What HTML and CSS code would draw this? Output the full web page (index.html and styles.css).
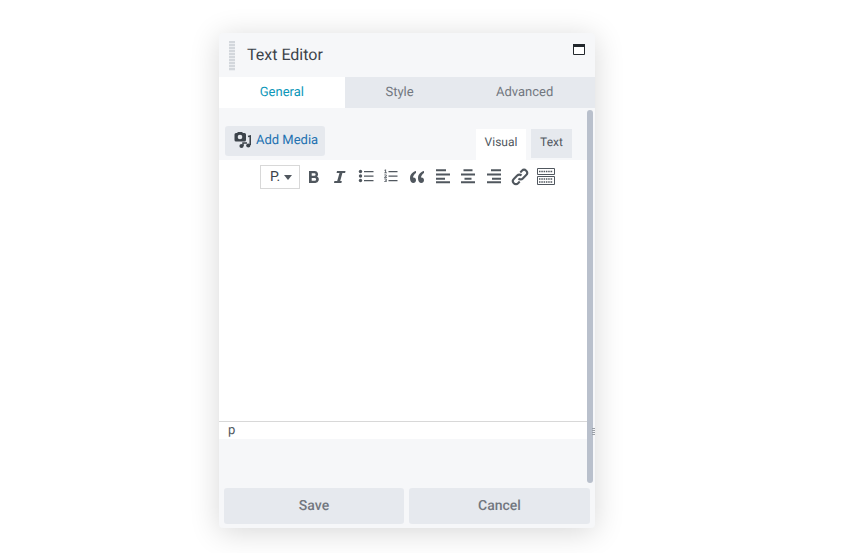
FILE: index.html
```html
<!DOCTYPE html>
<html lang="en">
<head>
    <meta charset="UTF-8">
    <title>Text Editor</title>
    <link rel="stylesheet" href="styles.css">
</head>
<body>
    <div class="panel">
        <div class="panel-head">
            <span class="grip"></span>
            <h1>Text Editor</h1>
            <svg class="max-icon" width="12" height="12" viewBox="0 0 12 12"><path d="M.5 1.500h11v10H.5z" fill="#fff" stroke="#23282d"/><path d="M0 1h12v3H0z" fill="#23282d"/></svg>
        </div>

        <div class="tabs">
            <div class="tab tab-general active">General</div>
            <div class="tab tab-style">Style</div>
            <div class="tab tab-advanced">Advanced</div>
        </div>

        <div class="panel-body">
            <div class="editor-top">
                <div class="add-media">
                    <svg width="18" height="18" viewBox="0 0 18 18">
                        <path d="M3 2h1l1-1h4l1 1h1.500a1.500 1.500 0 0 1 1.500 1.500V9a1.500 1.500 0 0 1-1.500 1.500H3A1.500 1.500 0 0 1 1.500 9V3.500A1.500 1.500 0 0 1 3 2z" fill="#3c434a"/>
                        <circle cx="7" cy="6" r="2.300" fill="#e6e9ee"/>
                        <path d="M15 5.500l2.300-.5v9" fill="none" stroke="#3c434a" stroke-width="1.700"/>
                        <circle cx="15.300" cy="14.500" r="2.100" fill="#3c434a"/>
                        <circle cx="8.500" cy="15" r="2.100" fill="#3c434a"/>
                        <path d="M10 15v-3h4" fill="none" stroke="#3c434a" stroke-width="1.500"/>
                    </svg>
                    <span>Add Media</span>
                </div>
                <div class="mode-tabs">
                    <div class="mode mode-visual">Visual</div>
                    <div class="mode mode-text">Text</div>
                </div>
            </div>

            <div class="editor">
                <div class="toolbar">
                    <div class="format-select">P.<span class="caret"></span></div>
                    <svg class="tool" width="16" height="16" viewBox="0 0 16 16"><path d="M3 2h5.800a3.200 3.200 0 0 1 2.300 5.500 3.500 3.500 0 0 1-2 6.500H3zM5.700 4.200v2.600h2.600a1.300 1.300 0 0 0 0-2.600zm0 4.800v2.800h3a1.400 1.400 0 0 0 0-2.800z" fill="#50575e" fill-rule="evenodd"/></svg>
                    <svg class="tool" width="16" height="16" viewBox="0 0 16 16"><path d="M5 2h8.500l-.4 2h-2.700L8.200 12h1.600l-.4 2H2l.4-2h2.800L7.500 4H4.600z" fill="#50575e"/></svg>
                    <svg class="tool" width="16" height="16" viewBox="0 0 16 16"><g fill="#50575e"><circle cx="2.500" cy="2.500" r="1.700"/><circle cx="2.500" cy="7" r="1.700"/><circle cx="2.500" cy="11.500" r="1.700"/><path d="M6 2h9.500v1.200H6zM6 6.500h9.500v1.200H6zM6 11h9.500v1.200H6z"/></g></svg>
                    <svg class="tool" width="16" height="16" viewBox="0 0 16 16"><g fill="#50575e"><path d="M5.500 2h9v1.200h-9zM5.500 6.500h9v1.200h-9zM5.500 11h9v1.200h-9z"/><path d="M1.300 1.100l1.200-.7h.6v3.200h.9v.7H1.200v-.7h1V1.300l-.9.500zM1 8.800v-.6c1-.7 1.800-1.200 1.800-1.700 0-.5-.8-.4-1.600 0v-.7c1-.6 2.600-.4 2.600.6 0 .7-.6 1.200-1.400 1.700H4v.7zM1.200 9.700c1-.4 2.600-.4 2.600.7 0 .4-.2.600-.5.800.4.200.6.400.6.800 0 1.200-1.700 1.300-2.700.8V12c.8.400 1.800.4 1.800-.1 0-.3-.4-.4-1-.4v-.6c.6 0 .9-.1.900-.4 0-.4-.9-.3-1.700 0z"/></g></svg>
                    <svg class="tool" width="16" height="16" viewBox="0 0 16 16"><path d="M7 2C4.300 2.600 1 4.800 1 9.200c0 3 1.500 4.800 3.300 4.800C5.900 14 7 12.800 7 11.200c0-1.600-1-2.700-2.400-2.700-.3 0-.5 0-.7.100C4.200 6.600 5.500 4.800 7 3.900zM15 2c-2.700.6-6 2.800-6 7.200 0 3 1.500 4.800 3.300 4.800 1.600 0 2.700-1.200 2.700-2.800 0-1.600-1-2.700-2.400-2.700-.3 0-.5 0-.7.100.3-2 1.600-3.800 3.100-4.700z" fill="#50575e"/></svg>
                    <svg class="tool" width="16" height="16" viewBox="0 0 16 16"><path d="M1 .3h10v2H1zM1 4.500h14v2H1zM1 8.700h9v2H1zM1 12.300h14v2H1z" fill="#50575e"/></svg>
                    <svg class="tool" width="16" height="16" viewBox="0 0 16 16"><path d="M3.500 .3h9v2h-9zM1 4.500h14v2H1zM4.500 8.700h7v2h-7zM1 12.300h14v2H1z" fill="#50575e"/></svg>
                    <svg class="tool" width="16" height="16" viewBox="0 0 16 16"><path d="M5 .3h10v2H5zM1 4.500h14v2H1zM6 8.700h9v2H6zM1 12.300h14v2H1z" fill="#50575e"/></svg>
                    <svg class="tool tool-wide" width="18" height="18" viewBox="0 0 18 18"><g fill="none" stroke="#50575e" stroke-width="2.100"><path d="M7.500 10.500a3 3 0 0 0 4.300 0l3.400-3.400a3 3 0 0 0-4.300-4.300L9.300 4.400"/><path d="M10.500 7.500a3 3 0 0 0-4.300 0l-3.400 3.400a3 3 0 0 0 4.300 4.300l1.600-1.600"/></g></svg>
                    <svg class="tool tool-wide" width="18" height="17" viewBox="0 0 18 17"><path d="M.5.500h17v6H.5zM.5 8.500h17v8H.5z" fill="none" stroke="#50575e"/><path d="M2 3.500h14M2 11h14M2 14h14" fill="none" stroke="#50575e" stroke-width="1.500" stroke-dasharray="1.500 .8"/></svg>
                </div>
                <div class="editor-area"></div>
                <div class="status">p</div>
            </div>

            <span class="scrollbar"></span>
            <span class="resize"></span>
        </div>

        <div class="panel-foot">
            <div class="btn btn-save">Save</div>
            <div class="btn btn-cancel">Cancel</div>
        </div>
    </div>
</body>
</html>
```

FILE: styles.css
```css
* {
    margin: 0;
    padding: 0;
    box-sizing: border-box;
}

body {
    font-family: 'Roboto', sans-serif;
    text-rendering: geometricPrecision;
    background-color: #fff;
    height: 553px;
    overflow: hidden;
    padding: 33px 0 0 219px;
}

.panel {
    width: 376px;
    height: 495px;
    background-color: #f6f7f9;
    border-radius: 4px;
    box-shadow: 0 4px 30px rgba(0, 0, 0, 0.16);
    display: flex;
    flex-direction: column;
}

.panel-head {
    height: 44px;
    display: flex;
    align-items: center;
    padding: 0 10px;
    flex: none;
}

.grip {
    width: 6px;
    height: 30px;
    margin-top: 1px;
    background: repeating-linear-gradient(#d3d7dc 0, #d3d7dc 2px, #eceef1 2px, #eceef1 3px);
}

h1 {
    font-size: 16px;
    font-weight: 400;
    color: #3c434a;
    margin-left: 12px;
    margin-bottom: 1px;
}

.max-icon {
    margin-left: auto;
    margin-bottom: 13px;
}

.tabs {
    height: 31px;
    display: flex;
    flex: none;
    background-color: #e6e9ee;
    font-size: 13px;
    color: #72777f;
}

.tab {
    display: flex;
    align-items: center;
    justify-content: center;
    padding-bottom: 1px;
}

.tab-general { width: 126px; }
.tab-style { width: 110px; }
.tab-advanced { width: 141px; }

.tab.active {
    background-color: #fff;
    color: #0d97b9;
}

.panel-body {
    height: 375px;
    flex: none;
    position: relative;
}

.editor-top {
    height: 52px;
    display: flex;
    align-items: flex-end;
    justify-content: space-between;
    padding-left: 6px;
    padding-right: 23px;
}

.add-media {
    width: 100px;
    height: 30px;
    margin-bottom: 4px;
    background-color: #e6e9ee;
    border-radius: 3px;
    display: flex;
    align-items: center;
    padding-left: 8px;
    padding-bottom: 2px;
    gap: 5px;
    font-size: 13px;
    color: #2271b1;
}

.mode-tabs {
    display: flex;
    gap: 5px;
    font-size: 12px;
    align-items: flex-start;
}

.mode {
    display: flex;
    align-items: center;
    justify-content: center;
    padding-bottom: 5px;
}

.mode-visual {
    width: 50px;
    height: 31px;
    background-color: #fff;
    color: #50575e;
}

.mode-text {
    width: 41px;
    height: 29px;
    background-color: #e6e9ee;
    color: #50575e;
    padding-bottom: 3px;
}

.editor {
    width: 368px;
    background-color: #fff;
}

.toolbar {
    height: 33px;
    padding: 5px 0 0 41px;
    display: flex;
    align-items: flex-start;
}

.format-select {
    width: 40px;
    height: 24px;
    border: 1px solid #d8d8d8;
    display: flex;
    align-items: center;
    padding-left: 9px;
    padding-bottom: 1px;
    font-size: 14px;
    color: #3c434a;
    margin-right: 1.500px;
}

.caret {
    width: 0;
    height: 0;
    margin-left: 4px;
    margin-top: 1px;
    border-left: 4px solid transparent;
    border-right: 4px solid transparent;
    border-top: 5px solid #50575e;
}

.tool {
    flex: none;
    margin: 4px 4.850px 0;
}

.tool-wide {
    margin: 3px 3.850px 0;
}

.editor-area {
    height: 229px;
    border-bottom: 1px solid #d8d8d8;
}

.status {
    height: 17px;
    font-size: 13px;
    line-height: 18px;
    color: #50575e;
    padding-left: 9px;
}

.scrollbar {
    position: absolute;
    left: 368px;
    top: 2px;
    width: 6px;
    height: 373px;
    border-radius: 3px;
    background-color: #b9c0cc;
}

.resize {
    position: absolute;
    left: 373px;
    top: 320px;
    width: 3px;
    height: 7px;
    background: repeating-linear-gradient(#9a9fa6 0, #9a9fa6 1px, transparent 1px, transparent 2px);
}

.panel-foot {
    display: flex;
    gap: 5px;
    padding: 5px 5px 0;
}

.btn {
    width: 180px;
    height: 36px;
    background-color: #e6e9ee;
    border-radius: 3px;
    display: flex;
    align-items: center;
    justify-content: center;
    font-size: 14px;
    font-weight: 500;
    color: #72777f;
}

.btn-cancel {
    width: 181px;
}
```
